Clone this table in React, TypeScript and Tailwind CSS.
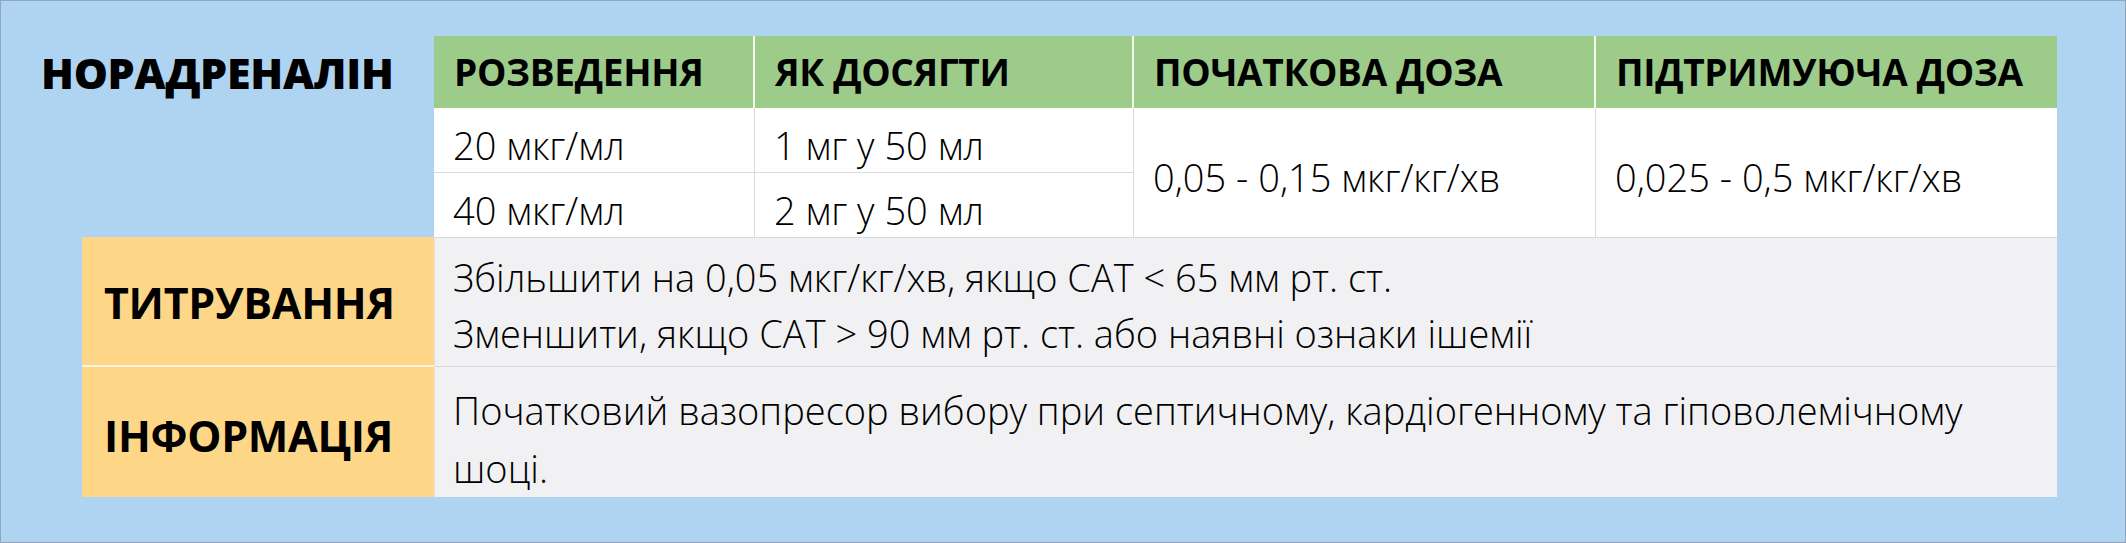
import React from "react";

const font = { fontFamily: '"Open Sans", "Noto Sans", sans-serif' };

const head = "bg-[#9dcb8a] flex items-center pl-[20px] text-[37px] font-bold tracking-[-0.3px]";
const cell = "bg-white flex items-center pl-[19px] pt-[10px] text-[38px] font-light";

export default function App() {
  return (
    <div
      className="w-[2126px] h-[543px] bg-[#afd4f1] border border-[#91a6bd] flex flex-col pt-[35px] text-black"
      style={font}
    >
      <div className="flex">
        <div className="w-[433px] h-[72px] flex items-center pl-[40px]">
          <span className="text-[43px] font-extrabold leading-none tracking-[-0.3px]">НОРАДРЕНАЛІН</span>
        </div>
        <div className="w-[1623px] grid grid-cols-[321px_379px_462px_461px] grid-rows-[72px_65px_64px]">
          <div className={`${head} border-r-2 border-[#f4f8ee]`}>РОЗВЕДЕННЯ</div>
          <div className={`${head} border-r-2 border-[#f4f8ee]`}>ЯК ДОСЯГТИ</div>
          <div className={`${head} border-r-2 border-[#f4f8ee]`}>ПОЧАТКОВА ДОЗА</div>
          <div className={head}>ПІДТРИМУЮЧА ДОЗА</div>

          <div className={`${cell} border-r border-b border-[#dcdcdc]`}>20 мкг/мл</div>
          <div className={`${cell} border-r border-b border-[#dcdcdc]`}>1 мг у 50 мл</div>
          <div className={`${cell} row-span-2 border-r border-[#dcdcdc]`}>0,05 - 0,15 мкг/кг/хв</div>
          <div className={`${cell} row-span-2`}>0,025 - 0,5 мкг/кг/хв</div>

          <div className={`${cell} border-r border-[#dcdcdc]`}>40 мкг/мл</div>
          <div className={`${cell} border-r border-[#dcdcdc]`}>2 мг у 50 мл</div>
        </div>
      </div>
      <div className="flex ml-[81px] w-[1975px]">
        <div className="w-[352px] flex flex-col">
          <div className="h-[130px] bg-[#fed687] border-b-2 border-[#fdf3dc] flex items-center pl-[22px] pt-[4px] text-[43px] font-bold tracking-[-0.3px]">ТИТРУВАННЯ</div>
          <div className="h-[130px] bg-[#fed687] flex items-center pl-[22px] pt-[8px] text-[43px] font-bold tracking-[-0.3px]">ІНФОРМАЦІЯ</div>
        </div>
        <div className="w-[1623px] flex flex-col bg-[#f1f1f3] border-l border-[#e0e0e0] font-light text-[38px]">
          <div className="h-[130px] border-t border-b border-[#d9d9d9] flex flex-col justify-center pl-[18px] pt-[5px] leading-[56px]">
            <div>Збільшити на 0,05 мкг/кг/хв, якщо САТ &lt; 65 мм рт. ст.</div>
            <div>Зменшити, якщо САТ &gt; 90 мм рт. ст. або наявні ознаки ішемії</div>
          </div>
          <div className="h-[130px] flex flex-col justify-center pl-[18px] pr-[10px] pt-[14px] leading-[58px]">
            <div>Початковий вазопресор вибору при септичному, кардіогенному та гіповолемічному</div>
            <div>шоці.</div>
          </div>
        </div>
      </div>
    </div>
  );
}
